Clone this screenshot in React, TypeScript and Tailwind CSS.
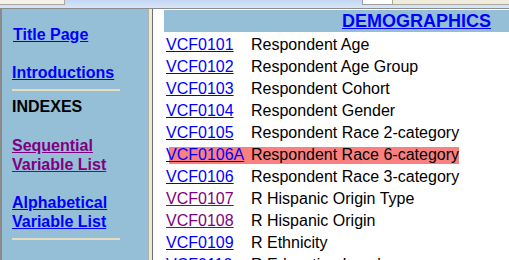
import React from "react";

const rows: { id: string; desc: string; visited?: boolean; hl?: boolean }[] = [
  { id: "VCF0101", desc: "Respondent Age" },
  { id: "VCF0102", desc: "Respondent Age Group" },
  { id: "VCF0103", desc: "Respondent Cohort" },
  { id: "VCF0104", desc: "Respondent Gender" },
  { id: "VCF0105", desc: "Respondent Race 2-category" },
  { id: "VCF0106A", desc: "Respondent Race 6-category", hl: true },
  { id: "VCF0106", desc: "Respondent Race 3-category" },
  { id: "VCF0107", desc: "R Hispanic Origin Type", visited: true },
  { id: "VCF0108", desc: "R Hispanic Origin", visited: true },
  { id: "VCF0109", desc: "R Ethnicity" },
  { id: "VCF0110", desc: "R Education Level" },
];

export default function App() {
  return (
    <div className="w-[509px] h-[260px] overflow-hidden flex flex-col bg-white font-['Liberation_Sans',Arial,sans-serif]">
      {/* top strip */}
      <div className="h-[8px] flex items-start bg-gradient-to-b from-[#c3d6f3] to-[#d9e6f9]">
        <div className="w-[65px] h-[5px] bg-[#f4f2e8] border-r border-b border-[#a9a9a0]" />
        <div className="flex-1" />
        <div className="w-[30px] h-[5px] bg-white border-l border-b border-[#a0a0a0]" />
        <div className="w-[117px] h-[5px] bg-[#efecdc] border-l border-b border-[#a9a9a0]" />
      </div>
      <div className="h-px bg-[#8c8c8c]" />
      <div className="flex flex-1 min-h-0">
        {/* left frame */}
        <div className="w-[148px] bg-[#95bed7] border-l-2 border-[#8a8a8a] pl-[10px] pt-[16px] text-[16px] leading-[19px] font-bold">
          <div>
            <a href="#" className="text-[#0000ff] underline ml-px">Title Page</a>
          </div>
          <div className="mt-[19px]">
            <a href="#" className="text-[#0000ff] underline">Introductions</a>
          </div>
          <div className="mt-[7px] w-[108px] h-[2px] bg-[#e6dcc0]" />
          <div className="mt-[6px] text-black">INDEXES</div>
          <div className="mt-[20px]">
            <a href="#" className="text-[#800080] underline">Sequential<br />Variable List</a>
          </div>
          <div className="mt-[19px]">
            <a href="#" className="text-[#0000ff] underline">Alphabetical<br />Variable List</a>
          </div>
          <div className="mt-[7px] w-[108px] h-[2px] bg-[#e6dcc0]" />
        </div>
        {/* splitter */}
        <div className="w-[5px] bg-[#ece9d8] border-l border-[#b4b2a6] border-r border-r-[#6e6e6e]" />
        {/* right frame */}
        <div className="flex-1 pl-[11px] flex flex-col">
          <div className="mt-px h-[22px] bg-[#95bed7] flex items-center justify-end pr-[18px] pt-px">
            <a href="#" className="text-[#0000ff] underline font-bold text-[18px] leading-[21px]">DEMOGRAPHICS</a>
          </div>
          <div className="mt-[2px] flex flex-col text-[16px] leading-[18px]">
            {rows.map((r) => (
              <div key={r.id} className="h-[22px] shrink-0 flex items-center pl-[2px]">
                {r.hl ? (
                  <div className="flex items-center h-[17px] bg-[#fa8080] ml-[3px] w-[290px]">
                    <a href="#" className="-ml-[3px] w-[85px] text-[#0000ff] underline whitespace-nowrap">{r.id}</a>
                    <span className="text-black whitespace-nowrap">{r.desc}</span>
                  </div>
                ) : (
                  <>
                    <a
                      href="#"
                      className={`w-[85px] underline whitespace-nowrap ${r.visited ? "text-[#800080]" : "text-[#0000ff]"}`}
                    >
                      {r.id}
                    </a>
                    <span className="text-black whitespace-nowrap">{r.desc}</span>
                  </>
                )}
              </div>
            ))}
          </div>
        </div>
      </div>
    </div>
  );
}
